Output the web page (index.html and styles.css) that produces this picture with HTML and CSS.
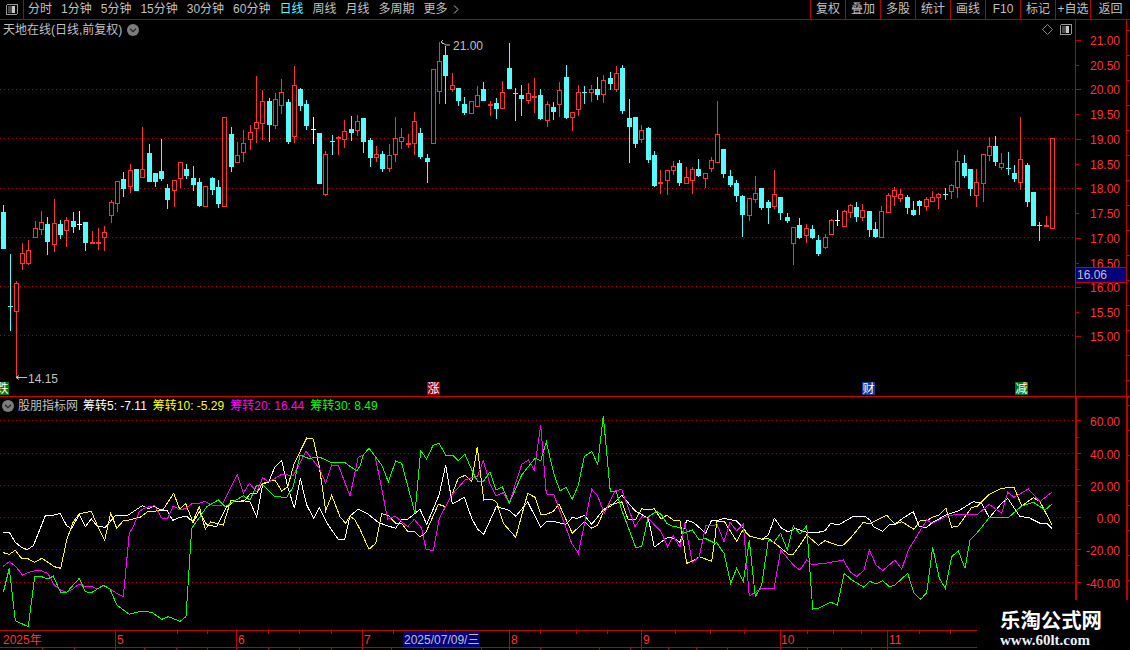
FILE: index.html
```html
<!DOCTYPE html>
<html lang="zh-CN">
<head>
<meta charset="utf-8">
<title>天地在线 日线</title>
<link rel="stylesheet" href="styles.css">
</head>
<body>
<div class="app">
  <header class="toolbar">
    <div class="toggle">
      <svg class="icon-box" viewBox="0 0 12 11"><rect class="box-frame" x="0.5" y="0.5" width="11" height="10" rx="1.5"/><rect class="box-dark" x="2" y="2" width="4" height="7"/><rect class="box-light" x="6" y="2" width="3" height="7"/></svg>
    </div>
    <nav class="tabs">
      <span>分时</span><span>1分钟</span><span>5分钟</span><span>15分钟</span><span>30分钟</span><span>60分钟</span>
      <span class="active">日线</span><span>周线</span><span>月线</span><span>多周期</span>
      <span class="more">更多<svg class="chev" viewBox="0 0 6 9"><path d="M1 .5 5 4.5 1 8.5"/></svg></span>
    </nav>
    <nav class="tools">
      <span>复权</span><span>叠加</span><span>多股</span><span>统计</span><span>画线</span><span>F10</span><span>标记</span><span>+自选</span><span class="back">返回</span>
    </nav>
  </header>

  <section class="panel panel-main">
    <svg id="main" class="chart" viewBox="0 20 1130 376"></svg>
    <div class="title-row">
      <span>天地在线(日线,前复权)</span>
      <svg class="round" viewBox="0 0 12 12"><circle cx="6" cy="6" r="6"/><path d="M3 4.8 6 7.6 9 4.8"/></svg>
    </div>
    <div class="corner-icons">
      <svg class="diamond" viewBox="0 0 11 11"><path d="M5.5.5 10.5 5.5 5.5 10.5 .5 5.5Z"/></svg>
      <svg class="icon-box" viewBox="0 0 12 11"><rect class="box-frame" x="0.5" y="0.5" width="11" height="10" rx="1.5"/><rect class="box-dark" x="2" y="2" width="4" height="7"/><rect class="box-light" x="6" y="2" width="3" height="7"/></svg>
    </div>
  </section>

  <section class="panel panel-ind">
    <svg id="ind" class="chart" viewBox="0 397 1130 233"></svg>
    <div class="legend">
      <svg class="round" viewBox="0 0 12 12"><circle cx="6" cy="6" r="6"/><path d="M3 4.8 6 7.6 9 4.8"/></svg>
      <span class="legend-name">股朋指标网</span>
      <span class="c-white">筹转5: -7.11</span>
      <span class="c-yellow">筹转10: -5.29</span>
      <span class="c-magenta">筹转20: 16.44</span>
      <span class="c-green">筹转30: 8.49</span>
    </div>
  </section>

  <svg id="time" class="timeaxis" viewBox="0 630 1130 20"></svg>

  <aside class="watermark">
    <div class="wm-cn">乐淘公式网</div>
    <div class="wm-en">www.60lt.com</div>
  </aside>
</div>
<script src="chart.js"></script>
</body>
</html>
```

FILE: styles.css
```css
* { box-sizing: border-box; }
html, body { margin: 0; padding: 0; background: #000; }
body { font: 12px/1 "Liberation Sans", "Noto Sans CJK SC", sans-serif; color: #c0c0c0; }

.app {
  position: relative;
  width: 1130px;
  height: 650px;
  overflow: hidden;
  background: #000;
  display: flex;
  flex-direction: column;
}

/* top bar */
.toolbar {
  flex: none;
  height: 20px;
  display: flex;
  border-bottom: 1px solid #b00000;
  line-height: 19px;
  white-space: nowrap;
}
.toggle {
  flex: none;
  width: 24px;
  border-right: 1px solid #b00000;
  display: flex;
  align-items: center;
  justify-content: center;
}
.icon-box { width: 12px; height: 11px; display: block; }
.box-frame { fill: none; stroke: #9a9a9a; }
.box-dark { fill: #4a4a4a; }
.box-light { fill: #c8c8c8; }
.tabs { display: flex; gap: 9px; padding-left: 4px; }
.tabs .active { color: #54fcfc; }
.more { display: flex; align-items: center; gap: 5px; }
.chev { width: 6px; height: 9px; }
.chev path { fill: none; stroke: #c0c0c0; }
.tools { display: flex; margin-left: auto; }
.tools span { width: 35px; border-left: 1px solid #b00000; text-align: center; }
.tools .back { width: 40px; }

/* chart panels */
.panel { position: relative; flex: none; }
.panel-main { height: 377px; border-bottom: 1px solid #d00000; }
.panel-ind { height: 233px; }
.chart { display: block; width: 1130px; height: 100%; }
.panel-main .chart { height: 376px; }
.timeaxis { display: block; flex: none; width: 1130px; height: 20px; }

.title-row {
  position: absolute;
  left: 3px;
  top: 3px;
  display: flex;
  align-items: center;
  gap: 5px;
  line-height: 14px;
}
.round { width: 12px; height: 12px; flex: none; }
.round circle { fill: #7d7d7d; }
.round path { fill: none; stroke: #222; stroke-width: 1.2; }
.corner-icons {
  position: absolute;
  left: 1042px;
  top: 4px;
  display: flex;
  gap: 7px;
}
.diamond { width: 11px; height: 11px; }
.diamond path { fill: none; stroke: #8a8a8a; }

.legend {
  position: absolute;
  left: 2px;
  top: 2px;
  display: flex;
  align-items: center;
  gap: 6px;
  line-height: 14px;
  white-space: pre;
}
.legend-name { margin-left: -2px; margin-right: -1px; }
.c-white { color: #fff; }
.c-yellow { color: #ff0; }
.c-magenta { color: #f0f; }
.c-green { color: #0f0; }

/* svg primitives */
text { font: 12px "Liberation Sans", "Noto Sans CJK SC", sans-serif; }
.grid { stroke: #a80000; stroke-dasharray: 1 3; fill: none; }
.axis { stroke: #c00000; fill: none; }
.axis-thick { stroke: #c00000; stroke-width: 2; fill: none; }
.tick { stroke: #c00000; }
.lbl { fill: #ff3232; }
.note { fill: #c0c0c0; }
.note-line { stroke: #c0c0c0; fill: none; }
.wick-r { stroke: #ff3232; }
.wick-c { stroke: #54fcfc; }
.wick-w { stroke: #fff; }
.body-r { fill: #000; stroke: #ff3232; }
.body-c { fill: #54fcfc; }
.flat-r { fill: #ff3232; }
.flat-c { fill: #54fcfc; }
.flat-w { fill: #fff; }
.last-box { fill: #00007d; stroke: #c00000; }
.date-box { fill: #00007d; }
.flag-text { fill: #fff; }
.flag-g { fill: #007800; }
.flag-r { fill: #a00000; }
.flag-b { fill: #0a3c9c; }
.line { fill: none; stroke-width: 1; shape-rendering: crispEdges; }
.l-white { stroke: #fff; }
.l-yellow { stroke: #ff0; }
.l-magenta { stroke: #f0f; }
.l-green { stroke: #0f0; }
rect, line { shape-rendering: crispEdges; }

/* watermark */
.watermark {
  position: absolute;
  left: 977px;
  top: 600px;
  width: 153px;
  height: 50px;
  background: #000;
  color: #fff;
  padding: 7px 0 0 23px;
}
.wm-cn { font: bold 20.4px/24px "Noto Sans CJK SC", sans-serif; white-space: nowrap; }
.wm-en { font: bold 15px/15px "Liberation Serif", serif; color: #e8f0ff; margin-top: 2px; }
```

FILE: chart.js
```js
var NS = 'http://www.w3.org/2000/svg';
function el(parent, tag, attrs, txt) {
  var e = document.createElementNS(NS, tag);
  for (var k in attrs) e.setAttribute(k, attrs[k]);
  if (txt !== undefined) e.textContent = txt;
  parent.appendChild(e);
  return e;
}
var main = document.getElementById('main');
var ind = document.getElementById('ind');
var time = document.getElementById('time');

function hline(p, cls, x1, x2, y) { el(p, 'line', {'class': cls, x1: x1, x2: x2, y1: y + .5, y2: y + .5}); }
function vline(p, cls, x, y1, y2) { el(p, 'line', {'class': cls, x1: x + .5, x2: x + .5, y1: y1, y2: y2}); }

/* ---------- main panel: grid and price axis ---------- */
[89, 138, 188, 237, 286, 335].forEach(function (y) { hline(main, 'grid', 0, 1075, y); });

/* candles: type, body top, body bottom, high, low (pixel rows) */
var C = [
['c',212,248,205,248],['c',306,306,254,330],['r',283,311,281,377],['r',253,263,243,269],['r',250,263,240,264],
['r',228,237,221,237],['r',222,229,211,234],['c',224,241,217,254],['r',223,244,199,251],['c',224,234,220,238],
['r',220,230,217,246],['c',221,226,212,232],['w',224,224,211,229],['c',222,242,222,250],['r',242,242,231,243],
['r',242,242,228,249],['r',232,237,226,250],['r',202,215,200,222],['r',181,203,181,211],['c',179,188,172,196],
['r',170,186,164,192],['c',169,190,169,190],['r',169,177,127,177],['c',153,181,144,181],['c',173,181,173,186],
['c',171,178,139,180],['c',188,199,184,208],['r',180,190,180,206],['r',162,178,162,187],['c',169,175,164,178],
['c',178,184,166,190],['c',182,205,178,206],['r',186,206,186,206],['c',178,189,177,194],['c',187,203,180,207],
['r',117,206,117,206],['c',134,166,127,171],['r',155,162,142,162],['r',143,152,130,161],['r',132,139,125,149],
['r',122,128,76,142],['r',101,123,90,139],['c',101,124,98,141],['r',99,125,93,128],['r',92,105,79,113],
['c',102,141,99,143],['r',85,136,66,142],['c',89,105,88,110],['c',104,125,100,129],['w',129,129,117,143],
['c',133,183,133,183],['r',154,194,151,195],['c',141,141,135,154],['r',137,137,136,154],['r',131,139,120,147],
['c',129,132,116,140],['r',121,130,115,135],['c',118,141,118,152],['c',140,157,138,166],['r',154,157,146,161],
['c',154,168,151,171],['r',155,168,144,171],['r',138,154,117,161],['r',137,141,128,148],['r',143,143,134,147],
['r',121,143,112,154],['c',133,156,128,158],['c',158,161,154,182],['r',69,143,69,143],['r',61,91,42,103],
['c',55,75,46,103],['r',85,89,73,91],['c',88,100,88,105],['c',104,112,97,114],['r',101,113,101,113],
['r',95,106,86,106],['c',89,100,82,100],['r',104,104,101,115],['c',103,108,98,118],['r',92,108,81,108],
['c',68,88,43,88],['c',93,93,88,120],['c',95,98,85,115],['r',93,100,83,103],['r',96,96,78,112],
['c',95,118,89,119],['r',104,120,101,126],['c',107,111,102,119],['r',90,104,82,116],['c',77,117,65,118],
['r',112,117,112,130],['r',92,109,85,115],['c',92,92,86,103],['r',89,92,85,101],['c',89,94,77,99],
['r',80,94,75,102],['c',78,83,72,89],['r',73,89,66,91],['c',68,110,65,113],['c',118,126,99,162],
['c',117,143,117,147],['r',130,139,125,142],['c',128,159,127,162],['c',155,185,151,186],['r',182,182,170,193],
['r',170,180,170,194],['r',166,170,161,174],['c',163,182,160,185],['r',177,183,167,183],['r',169,180,167,193],
['c',169,175,159,176],['r',173,178,173,187],['r',160,168,157,171],['r',134,162,101,162],['c',149,173,149,177],
['c',176,184,170,186],['c',183,195,180,201],['c',196,214,195,236],['r',198,215,198,220],['r',193,199,176,202],
['c',188,207,188,209],['c',202,207,200,223],['r',194,206,170,208],['c',197,212,197,219],['c',217,220,213,222],
['r',227,243,227,264],['c',225,237,218,238],['r',228,235,224,242],['c',229,237,225,238],['c',240,253,235,255],
['r',237,247,234,248],['r',220,234,219,234],['w',220,220,210,225],['r',211,226,210,226],['r',205,212,204,217],
['c',207,216,202,221],['r',210,217,204,220],['c',211,229,211,236],['c',229,236,222,237],['r',211,237,206,237],
['r',195,212,193,212],['r',190,196,187,205],['r',194,198,189,201],['c',197,207,195,213],['c',210,214,201,215],
['c',201,205,200,214],['r',199,206,197,210],['r',197,201,191,201],['r',194,197,193,208],['c',194,194,188,199],
['r',185,191,184,198],['r',161,187,150,197],['c',163,175,155,177],['c',169,188,169,195],['r',182,195,169,206],
['r',154,183,154,201],['r',146,155,137,160],['c',146,161,136,165],['r',163,167,153,169],['c',168,168,152,174],
['c',173,178,165,181],['r',159,182,117,189],['c',165,201,163,206],['c',192,225,192,225],['c',225,225,222,240],
['r',225,225,216,226],['r',138,228,138,228]
];
var STEP = 1048.8 / 166;
C.forEach(function (c, i) {
  var t = c[0], top = c[1], bot = c[2], hi = c[3], lo = c[4];
  var x = Math.round(3.2 + STEP * i);
  if (lo > hi) vline(main, 'wick-' + t, x, hi, lo + 1);
  if (top === bot) {
    var thick = t === 'r' ? 2 : 1;
    el(main, 'rect', {'class': 'flat-' + t, x: x - 2, y: top, width: 5, height: thick});
  } else if (t === 'r') {
    el(main, 'rect', {'class': 'body-r', x: x - 2 + .5, y: top + .5, width: 4, height: bot - top});
  } else {
    el(main, 'rect', {'class': 'body-c', x: x - 2, y: top, width: 5, height: bot - top + 1});
  }
});

/* price axis */
vline(main, 'axis', 1075, 20, 396);
vline(main, 'axis', 1126, 20, 396);
[[21, 40], [20.5, 65], [20, 89], [19.5, 114], [19, 139], [18.5, 164], [18, 188], [17.5, 213], [17, 238], [16.5, 263], [16, 287], [15.5, 312], [15, 336]].forEach(function (p) {
  var whole = p[0] === Math.floor(p[0]);
  hline(main, 'tick', 1075, whole ? 1081 : 1079, p[1]);
  el(main, 'text', {'class': 'lbl', x: 1120, y: p[1] + 5, 'text-anchor': 'end'}, p[0].toFixed(2));
});
for (var ty = 30; ty < 396; ty += 25) hline(main, 'tick', 1126, 1130, ty);

el(main, 'rect', {'class': 'last-box', x: 1075.5, y: 267.5, width: 51, height: 15});
el(main, 'text', {'class': 'note', x: 1077, y: 279}, '16.06');

/* high / low notes */
el(main, 'path', {'class': 'note-line', d: 'M450 45H446L441 42M441 42l2-2M441 42l2 2'});
el(main, 'text', {'class': 'note', x: 453, y: 50}, '21.00');
el(main, 'path', {'class': 'note-line', d: 'M27 377.5H16M16 377.5l3-2M16 377.5l3 2'});
el(main, 'text', {'class': 'note', x: 28, y: 383}, '14.15');

/* event flags */
[[-4, 'flag-g', '跌'], [427, 'flag-r', '涨'], [862, 'flag-b', '财'], [1015, 'flag-g', '减']].forEach(function (f) {
  el(main, 'rect', {'class': f[1], x: f[0], y: 382, width: 13, height: 13});
  el(main, 'text', {'class': 'flag-text', x: f[0] + .5, y: 393}, f[2]);
});

/* ---------- indicator panel ---------- */
var GY = [[60, 420], [40, 453], [20, 485], [0, 517], [-20, 549], [-40, 582]];
GY.forEach(function (g) { hline(ind, 'grid', 0, 1075, g[1]); });

/* traced polylines, in three overlapping crops: x = offset + a/3, y = 410 + b/3 */
var OFF = [0, 355, 710];
var SERIES = {
  white: [
   [10,367,28,367,46,397,64,412,82,419,100,407,118,362,136,317,160,316,180,310,200,347,214,356,238,314,256,350,274,327,292,349,316,352,346,317,385,315,427,287,445,296,463,288,481,300,500,300,518,331,540,322,560,319,580,337,598,305,620,344,650,350,680,290,700,276,730,272,750,275,770,320,788,222,806,216,825,170,845,152,863,230,883,295,901,205,920,285,941,325,958,292,980,338,1016,390,1034,389,1050,318,1074,298],
   [10,298,40,313,70,337,90,345,122,355,140,328,158,328,195,298,215,343,252,256,272,165,292,282,328,262,350,325,368,358,386,373,424,290,463,301,482,319,518,276,557,352,575,334,595,334,632,343,651,323,668,325,688,316,710,343,748,296,766,290,800,256,840,302,880,325,898,411,938,382,956,385,975,397,995,331,1015,337,1052,370,1070,330,1080,330],
   [10,328,22,332,42,325,80,333,100,355,118,378,155,388,175,375,193,325,215,355,235,366,255,355,290,367,325,367,345,362,362,340,385,345,428,320,465,319,480,330,490,350,518,364,538,345,555,343,575,327,610,305,628,350,650,352,668,337,708,315,745,303,790,275,815,280,838,323,875,280,893,265,930,320,955,322,990,340,1010,340,1026,355]
  ],
  yellow: [
   [10,428,28,433,46,421,64,444,82,445,103,457,126,445,163,470,182,475,200,390,220,335,238,311,274,304,298,360,314,390,332,310,350,355,370,332,388,330,420,322,445,304,463,304,490,298,521,250,539,298,557,281,578,335,598,290,616,358,632,336,670,345,692,272,730,276,750,252,770,250,788,220,825,210,845,243,863,230,883,160,920,84,940,87,958,170,977,302,995,256,1020,320,1037,340,1050,318,1065,330,1080,358],
   [42,418,62,400,80,311,100,316,122,340,140,340,158,364,178,364,195,380,212,368,250,283,272,290,290,255,310,205,330,196,350,215,367,110,386,270,410,267,425,277,445,340,482,382,518,250,540,262,557,313,575,313,595,304,612,282,652,370,688,335,710,355,728,345,748,300,766,285,800,275,820,330,842,328,860,296,880,300,898,296,918,327,935,316,955,330,975,332,995,460,1015,452,1033,440,1070,454,1080,385],
   [10,400,20,335,42,333,62,365,80,393,100,358,118,378,155,388,175,385,195,400,235,432,250,433,270,405,290,375,325,406,345,392,380,405,400,405,425,380,460,337,478,342,530,316,555,342,575,335,612,358,630,332,650,332,670,320,688,315,708,295,725,352,745,348,785,292,800,290,838,253,875,235,912,232,935,288,970,263,990,275,1026,345]
  ],
  magenta: [
   [10,469,28,455,46,468,68,496,86,487,105,482,125,483,143,490,163,525,182,541,200,547,218,537,238,522,256,530,274,529,292,537,310,527,330,537,350,550,370,560,388,370,400,350,418,304,436,293,464,287,485,324,503,325,520,288,540,300,558,295,578,279,598,280,615,274,635,285,665,286,712,194,730,250,748,220,770,245,788,203,806,216,845,193,880,197,918,124,958,175,977,220,995,165,1016,168,1050,258,1074,145],
   [10,142,25,135,42,115,60,138,75,210,98,328,120,318,158,350,178,328,200,355,213,418,235,422,253,325,290,255,330,210,368,198,385,152,405,222,423,258,445,248,463,280,500,163,520,150,538,180,557,45,574,252,596,253,650,400,670,430,710,238,728,258,748,310,780,243,800,238,840,350,860,320,880,325,918,365,938,410,955,377,975,412,990,340,1012,458,1033,440,1052,347,1080,345],
   [20,340,42,395,60,337,80,362,100,343,118,558,155,535,192,536,212,420,250,465,270,480,290,450,305,464,345,460,400,450,420,485,440,500,462,480,478,420,498,465,518,482,555,450,575,478,595,420,650,330,668,340,710,318,745,313,800,315,838,283,875,310,893,247,912,262,955,237,990,275,1026,246]
  ],
  green: [
   [10,547,28,475,46,632,85,650,104,500,125,500,143,507,160,498,182,548,200,547,238,505,256,545,274,548,310,526,330,537,350,585,388,613,425,603,455,607,485,628,505,620,540,634,558,620,575,355,600,320,620,290,655,270,675,290,730,257,750,270,770,225,788,225,825,260,860,262,880,230,900,135,925,145,960,142,995,158,1035,158,1070,183,1080,168],
   [25,135,42,115,80,165,100,215,122,153,140,160,180,310,197,122,215,147,234,106,252,100,272,135,292,135,310,152,330,133,350,180,368,215,385,215,405,185,423,240,442,230,463,280,500,195,540,145,557,152,574,95,596,190,615,243,633,232,652,268,670,225,688,140,710,124,728,163,745,18,766,245,784,245,800,300,842,412,860,410,880,320,905,304,920,315,935,340,955,350,975,352,985,370,1012,360,1033,390,1050,385,1080,400],
   [20,398,42,430,62,520,80,475,100,515,118,390,136,560,155,525,175,390,192,397,212,370,232,420,250,348,270,372,290,347,308,597,325,595,362,577,382,585,403,490,425,510,462,532,480,514,498,522,518,512,538,530,555,525,593,490,612,550,632,568,650,548,668,412,688,505,706,535,725,440,745,423,765,475,780,390,800,370,838,323,895,323,935,288,970,277,1005,300,1026,282]
  ]
};
Object.keys(SERIES).forEach(function (name) {
  var pts = [], lastX = -1;
  SERIES[name].forEach(function (seg, s) {
    for (var i = 0; i < seg.length; i += 2) {
      var x = OFF[s] + seg[i] / 3, y = 410 + seg[i + 1] / 3;
      if (x > lastX) { pts.push(x.toFixed(1) + ',' + y.toFixed(1)); lastX = x; }
    }
  });
  el(ind, 'polyline', {'class': 'line l-' + name, points: pts.join(' ')});
});

el(ind, 'line', {'class': 'axis-thick', x1: 1076, x2: 1076, y1: 397, y2: 600});
el(ind, 'line', {'class': 'axis-thick', x1: 1127, x2: 1127, y1: 397, y2: 600});
GY.forEach(function (g) {
  hline(ind, 'tick', 1075, 1081, g[1]);
  el(ind, 'text', {'class': 'lbl', x: 1120, y: g[1] + 6, 'text-anchor': 'end'}, g[0].toFixed(2));
});
[437, 469, 501, 533, 565].forEach(function (y) { hline(ind, 'tick', 1075, 1079, y); });
for (var t2 = 405; t2 < 600; t2 += 25) hline(ind, 'tick', 1127, 1130, t2);

/* ---------- time axis ---------- */
hline(time, 'axis', 0, 977, 630);
hline(time, 'axis', 0, 977, 647);
[115, 236, 362, 509, 641, 780, 887].forEach(function (x) { vline(time, 'axis', x, 630, 650); });
[177, 207, 268, 299, 331, 393, 445, 540, 576, 607, 675, 710, 744, 807, 833, 861, 919, 950].forEach(function (x) { vline(time, 'tick', x, 631, 634); });
[42, 74, 144, 176, 207, 268, 299, 331, 391, 423, 481, 540, 599, 630, 668, 696, 727, 807, 841, 871].forEach(function (x) { vline(time, 'tick', x, 648, 650); });
[[3, '2025年'], [117, '5'], [238, '6'], [364, '7'], [511, '8'], [643, '9'], [781, '10'], [889, '11']].forEach(function (m) {
  el(time, 'text', {'class': 'lbl', x: m[0], y: 644}, m[1]);
});
el(time, 'rect', {'class': 'date-box', x: 403, y: 632, width: 77, height: 15});
el(time, 'text', {'class': 'note', x: 404, y: 644}, '2025/07/09/三');
```
